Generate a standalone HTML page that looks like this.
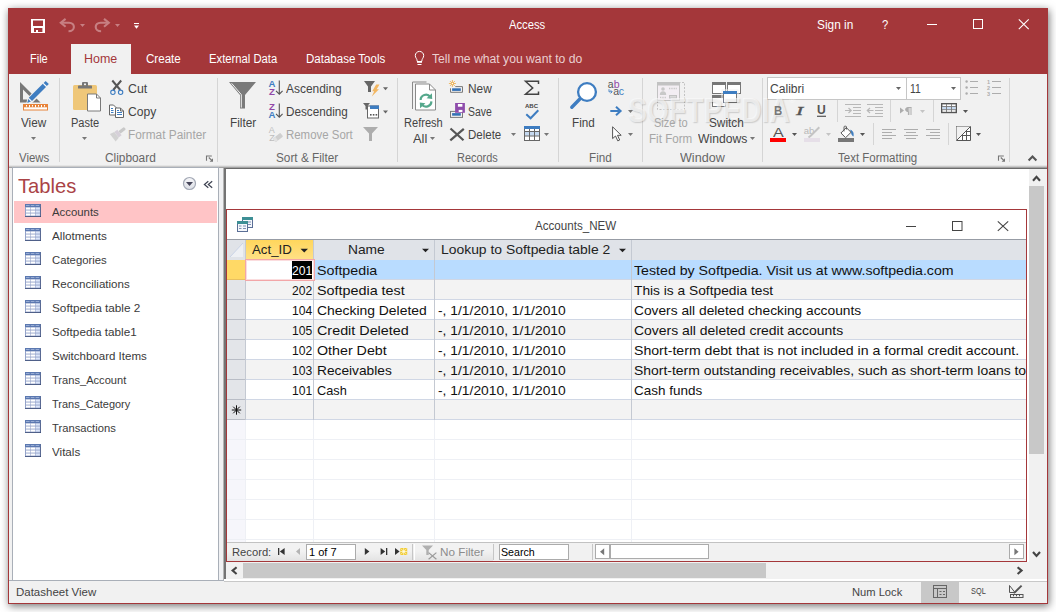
<!DOCTYPE html>
<html lang="en"><head><meta charset="utf-8"><title>Access</title>
<style>
html,body{margin:0;padding:0;}
body{width:1056px;height:612px;position:relative;overflow:hidden;background:#fff;font-family:"Liberation Sans",sans-serif;}
div{position:absolute;box-sizing:border-box;}
.t{position:absolute;white-space:nowrap;line-height:1;transform-origin:0 0;display:block;}
svg{position:absolute;left:0;top:0;}
</style></head><body>
<div style="left:8px;top:8px;width:1040px;height:596px;background:#F1F1F1;box-shadow:1px 2px 8px rgba(0,0,0,.55);"></div>
<div style="left:8px;top:8px;width:1040px;height:66px;background:#A4373A;"></div>
<div style="left:71px;top:44px;width:60px;height:30px;background:#F1F1F1;"></div>
<div style="left:9px;top:165px;width:1038px;height:1px;background:#E4E4E4;"></div>
<div style="left:9px;top:166px;width:1038px;height:1px;background:#CACACA;"></div>
<div style="left:9px;top:167px;width:1038px;height:1px;background:#A2A2A2;"></div>
<div style="left:8px;top:8px;width:1040px;height:596px;border:1px solid #A4373A;"></div>
<div style="left:12px;top:167px;width:207px;height:414px;background:#fff;border:1px solid #A9AFB8;"></div>
<div style="left:14px;top:201px;width:203px;height:22px;background:#FFC4C6;"></div>
<div style="left:219px;top:168px;width:4px;height:412px;background:#F0F1F3;"></div>
<div style="left:223px;top:168px;width:1px;height:412px;background:#B4B4B4;"></div>
<div style="left:9px;top:580px;width:215px;height:1px;background:#A9AFB8;"></div>
<div style="left:224px;top:168px;width:823px;height:411px;background:#fff;border-left:2px solid #747474;border-top:1px solid #6B6B6B;"></div>
<div style="left:224px;top:579px;width:823px;height:2px;background:#fff;"></div>
<div style="left:224px;top:581px;width:823px;height:1px;background:#C8C8C8;"></div>
<div style="left:1029px;top:169px;width:15px;height:394px;background:#F1F1F1;"></div>
<div style="left:1029px;top:186px;width:15px;height:268px;background:#C8C8C8;"></div>
<div style="left:1044px;top:169px;width:3px;height:410px;background:#F1F1F1;"></div>
<div style="left:226px;top:562px;width:821px;height:17px;background:#F1F1F1;"></div>
<div style="left:243px;top:563px;width:523px;height:15px;background:#C8C8C8;"></div>
<div style="left:226px;top:209px;width:801px;height:353px;background:#fff;border:1px solid #A4373A;"></div>
<div style="left:227px;top:239px;width:799px;height:21px;background:#E0E3E8;border-top:1px solid #979CA5;"></div>
<div style="left:246px;top:240px;width:68px;height:20px;background:linear-gradient(#FFD65C,#FFE187);"></div>
<div style="left:246px;top:260px;width:780px;height:20px;background:#B9DCFF;border-bottom:1px solid #D0D7E5;"></div>
<div style="left:246px;top:280px;width:780px;height:20px;background:#F3F3F3;border-bottom:1px solid #D0D7E5;"></div>
<div style="left:246px;top:300px;width:780px;height:20px;background:#fff;border-bottom:1px solid #D0D7E5;"></div>
<div style="left:246px;top:320px;width:780px;height:20px;background:#F3F3F3;border-bottom:1px solid #D0D7E5;"></div>
<div style="left:246px;top:340px;width:780px;height:20px;background:#fff;border-bottom:1px solid #D0D7E5;"></div>
<div style="left:246px;top:360px;width:780px;height:20px;background:#F3F3F3;border-bottom:1px solid #D0D7E5;"></div>
<div style="left:246px;top:380px;width:780px;height:20px;background:#fff;border-bottom:1px solid #D0D7E5;"></div>
<div style="left:246px;top:400px;width:780px;height:20px;background:#F3F3F3;border-bottom:1px solid #D0D7E5;"></div>
<div style="left:227px;top:420px;width:19px;height:123px;background:#F6F6FB;"></div>
<div style="left:227px;top:420px;width:799px;height:20px;border-bottom:1px solid #EEF0F5;"></div>
<div style="left:227px;top:440px;width:799px;height:20px;border-bottom:1px solid #EEF0F5;"></div>
<div style="left:227px;top:460px;width:799px;height:20px;border-bottom:1px solid #EEF0F5;"></div>
<div style="left:227px;top:480px;width:799px;height:20px;border-bottom:1px solid #EEF0F5;"></div>
<div style="left:227px;top:500px;width:799px;height:20px;border-bottom:1px solid #EEF0F5;"></div>
<div style="left:227px;top:520px;width:799px;height:20px;border-bottom:1px solid #EEF0F5;"></div>
<div style="left:227px;top:540px;width:799px;height:20px;border-bottom:1px solid #EEF0F5;"></div>
<div style="left:227px;top:260px;width:19px;height:160px;background:#E3E5E9;"></div>
<div style="left:227px;top:260px;width:19px;height:20px;border-bottom:1px solid #B9BDC6;"></div>
<div style="left:227px;top:280px;width:19px;height:20px;border-bottom:1px solid #B9BDC6;"></div>
<div style="left:227px;top:300px;width:19px;height:20px;border-bottom:1px solid #B9BDC6;"></div>
<div style="left:227px;top:320px;width:19px;height:20px;border-bottom:1px solid #B9BDC6;"></div>
<div style="left:227px;top:340px;width:19px;height:20px;border-bottom:1px solid #B9BDC6;"></div>
<div style="left:227px;top:360px;width:19px;height:20px;border-bottom:1px solid #B9BDC6;"></div>
<div style="left:227px;top:380px;width:19px;height:20px;border-bottom:1px solid #B9BDC6;"></div>
<div style="left:227px;top:400px;width:19px;height:20px;border-bottom:1px solid #B9BDC6;"></div>
<div style="left:227px;top:260px;width:19px;height:20px;background:#FFD966;border-bottom:1px solid #E8C060;"></div>
<div style="left:245px;top:240px;width:1px;height:180px;background:#C4C9D2;"></div>
<div style="left:245px;top:420px;width:1px;height:123px;background:#EEF0F5;"></div>
<div style="left:313px;top:240px;width:1px;height:180px;background:#C4C9D2;"></div>
<div style="left:313px;top:420px;width:1px;height:123px;background:#EEF0F5;"></div>
<div style="left:434px;top:240px;width:1px;height:180px;background:#C4C9D2;"></div>
<div style="left:434px;top:420px;width:1px;height:123px;background:#EEF0F5;"></div>
<div style="left:631px;top:240px;width:1px;height:180px;background:#C4C9D2;"></div>
<div style="left:631px;top:420px;width:1px;height:123px;background:#EEF0F5;"></div>
<div style="left:245px;top:259px;width:70px;height:22px;background:#fff;border:1px solid #F2A6A8;box-shadow:inset 0 0 0 1px rgba(244,170,172,.4);"></div>
<div style="left:292px;top:261px;width:20px;height:18px;background:#000;"></div>
<div style="left:227px;top:542px;width:799px;height:19px;background:#F1F1F1;border-top:1px solid #C2C2C2;"></div>
<div style="left:227px;top:543px;width:266px;height:18px;background:linear-gradient(#F2F2F2 45%,#E3E3E3);"></div>
<div style="left:306px;top:544px;width:50px;height:16px;background:#fff;border:1px solid #ABABAB;"></div>
<div style="left:412px;top:544px;width:1px;height:16px;background:#C6C6C6;"></div>
<div style="left:414px;top:544px;width:1px;height:16px;background:#fff;"></div>
<div style="left:493px;top:544px;width:1px;height:16px;background:#C6C6C6;"></div>
<div style="left:499px;top:544px;width:70px;height:16px;background:#fff;border:1px solid #ABABAB;"></div>
<div style="left:592px;top:544px;width:1px;height:16px;background:#C6C6C6;"></div>
<div style="left:595px;top:544px;width:15px;height:15px;background:#fff;border:1px solid #ABABAB;"></div>
<div style="left:610px;top:544px;width:99px;height:15px;background:#fff;border:1px solid #ABABAB;"></div>
<div style="left:1009px;top:544px;width:15px;height:15px;background:#fff;border:1px solid #ABABAB;"></div>
<div style="left:921px;top:581px;width:38px;height:22px;background:#C8C8C8;"></div>
<div style="left:59px;top:78px;width:1px;height:84px;background:#D5D5D5;"></div>
<div style="left:217px;top:78px;width:1px;height:84px;background:#D5D5D5;"></div>
<div style="left:397px;top:78px;width:1px;height:84px;background:#D5D5D5;"></div>
<div style="left:558px;top:78px;width:1px;height:84px;background:#D5D5D5;"></div>
<div style="left:642px;top:78px;width:1px;height:84px;background:#D5D5D5;"></div>
<div style="left:762px;top:78px;width:1px;height:84px;background:#D5D5D5;"></div>
<div style="left:1009px;top:78px;width:1px;height:84px;background:#D5D5D5;"></div>
<div style="left:837px;top:100px;width:1px;height:22px;background:#D5D5D5;"></div>
<div style="left:890px;top:100px;width:1px;height:22px;background:#D5D5D5;"></div>
<div style="left:933px;top:100px;width:1px;height:22px;background:#D5D5D5;"></div>
<div style="left:873px;top:123px;width:1px;height:22px;background:#D5D5D5;"></div>
<div style="left:948px;top:123px;width:1px;height:22px;background:#D5D5D5;"></div>
<div style="left:767px;top:77px;width:140px;height:23px;background:#fff;border:1px solid #C6C6C6;"></div>
<div style="left:906px;top:77px;width:55px;height:23px;background:#fff;border:1px solid #C6C6C6;"></div>
<svg width="1056" height="612" viewBox="0 0 1056 612">
<rect x="31" y="19" width="14" height="14" fill="#fff"/>
<rect x="33" y="20.5" width="10" height="5.5" fill="#A4373A"/>
<rect x="34" y="28" width="8.4" height="4" fill="#A4373A"/>
<rect x="36" y="30" width="2" height="2" fill="#fff"/>
<path d="M61,22.8 H69 C75.6,22.8 75.6,31.2 68.5,31.2" fill="none" stroke="#C77F82" stroke-width="2.1"/>
<path d="M65.6,18.9 L60.8,22.8 L65.6,26.7" fill="none" stroke="#C77F82" stroke-width="2.1"/>
<path d="M108.6,22.8 H100.6 C94,22.8 94,31.2 101.1,31.2" fill="none" stroke="#C77F82" stroke-width="2.1"/>
<path d="M104,18.9 L108.8,22.8 L104,26.7" fill="none" stroke="#C77F82" stroke-width="2.1"/>
<polygon points="80,24 85,24 82.5,27" fill="#C77F82"/>
<polygon points="115,24 120,24 117.5,27" fill="#C77F82"/>
<rect x="134" y="23" width="5" height="1" fill="#fff"/>
<polygon points="134,25.5 139,25.5 136.5,28.7" fill="#fff"/>
<rect x="927" y="24" width="10" height="1" fill="#fff"/>
<rect x="973.5" y="19.5" width="9" height="9" fill="none" stroke="#fff" stroke-width="1"/>
<path d="M1018.8,19.3 L1028.7,29.2 M1028.7,19.3 L1018.8,29.2" stroke="#fff" stroke-width="1.1" fill="none"/>
<path d="M417.2,61.3 C417.2,58.6 415.3,58 415.3,55.6 A4.2,4.2 0 1 1 423.7,55.6 C423.7,58 421.8,58.6 421.8,61.3" fill="none" stroke="#fff" stroke-width="1"/>
<rect x="417" y="61" width="5" height="1.8" fill="#fff"/><rect x="417.5" y="64" width="4" height="1" fill="#fff"/>
<path d="M20,82 L20,102.5 L40.5,102.5 Z M23,89.5 L23,99.5 L33,99.5 Z" fill="#787878" fill-rule="evenodd"/>
<path d="M45.2,80.8 L49,84.6 L31.5,102 L27.6,103 L28.6,98.6 Z" fill="#fff" stroke="#F1F1F1" stroke-width="2.4"/>
<path d="M45.6,80.9 L48.8,84.1 L46.8,86.1 L43.6,82.9 Z" fill="#3E7DC1"/>
<path d="M42.8,83.7 L46,86.9 L32,100.9 L28.8,97.7 Z" fill="#3E7DC1"/>
<path d="M28.2,98.9 L30.9,101.6 L27.3,103 Z" fill="#3E7DC1"/>
<rect x="23.5" y="104.5" width="24" height="5.5" fill="#fff" stroke="#E8843B" stroke-width="1"/>
<rect x="24" y="105" width="23" height="2.3" fill="#E8843B"/>
<rect x="26" y="105" width="1" height="1.6" fill="#fff"/>
<rect x="29" y="105" width="1" height="2.3" fill="#fff"/>
<rect x="32" y="105" width="1" height="1.6" fill="#fff"/>
<rect x="35" y="105" width="1" height="2.3" fill="#fff"/>
<rect x="38" y="105" width="1" height="1.6" fill="#fff"/>
<rect x="41" y="105" width="1" height="2.3" fill="#fff"/>
<rect x="44" y="105" width="1" height="1.6" fill="#fff"/>
<polygon points="31,137 36,137 33.5,140" fill="#777"/>
<polygon points="82,137 87,137 84.5,140" fill="#777"/>
<rect x="73" y="85" width="24" height="25" rx="1.5" fill="#EFC779"/>
<path d="M78,88.5 V86.2 Q78,85.5 78.8,85.5 H82 V83 Q82,82 83,82 H87 Q88,82 88,83 V85.5 H91.2 Q92,85.5 92,86.2 V88.5 Z M84,83.6 H86 V85.2 H84 Z" fill="#777" fill-rule="evenodd"/>
<path d="M87.5,94 H96.5 L100.5,98 V111 H87.5 Z" fill="#fff" stroke="#7A7A7A" stroke-width="1"/>
<path d="M96.5,94 V98 H100.5" fill="none" stroke="#7A7A7A" stroke-width="1"/>
<path d="M112.3,80.5 L120.3,90 M121.2,80.5 L113.2,90" stroke="#555" stroke-width="2" fill="none"/>
<circle cx="112.9" cy="92.3" r="2.2" fill="none" stroke="#3E7DC1" stroke-width="1.1"/><circle cx="120.6" cy="92.3" r="2.2" fill="none" stroke="#3E7DC1" stroke-width="1.1"/>
<path d="M109.5,105 H113.5 L116.5,108 V115 H109.5 Z" fill="#fff" stroke="#666" stroke-width="1"/>
<path d="M111,108.5 H113 M111,110.5 H113.5 M111,112.5 H113.5" stroke="#3E7DC1" stroke-width="1"/>
<path d="M115.5,108 H120.5 L123.5,111 V117.5 H115.5 Z" fill="#fff" stroke="#666" stroke-width="1"/>
<path d="M120.5,108 V111 H123.5" fill="none" stroke="#666" stroke-width="1"/>
<path d="M117,112.5 H122 M117,114.5 H122 M117,110.5 H119" stroke="#3E7DC1" stroke-width="1"/>
<g transform="rotate(-38 117.5 134)"><rect x="120" y="132.4" width="7" height="3.2" rx="1" fill="#C9C9C9"/><rect x="116.2" y="130.5" width="3.8" height="7" fill="#D6D0D9"/><path d="M116.2,130.3 L111.5,129.3 L111.5,138.7 L116.2,137.7 Z" fill="#D2D2D2"/></g>
<path d="M229,82 H256 L245,95 V108.5 H240 V95 Z" fill="#7A7A7A"/>
<path d="M231.6,83.3 L241.3,94.6 V107.6" fill="none" stroke="#fff" stroke-width="0.9"/>
<text x="268.5" y="86.7" font-family="Liberation Sans, sans-serif" font-size="9.6" font-weight="bold" fill="#3E7DC1" >A</text>
<text x="269" y="95" font-family="Liberation Sans, sans-serif" font-size="9.6" font-weight="bold" fill="#9148A8" >Z</text>
<text x="269" y="109.7" font-family="Liberation Sans, sans-serif" font-size="9.6" font-weight="bold" fill="#9148A8" >Z</text>
<text x="268.5" y="118" font-family="Liberation Sans, sans-serif" font-size="9.6" font-weight="bold" fill="#3E7DC1" >A</text>
<path d="M279.3,80.5 V94.0 M276,90.8 L279.3,94.2 L282.6,90.8" fill="none" stroke="#555" stroke-width="1.1"/>
<path d="M279.3,103.5 V117.0 M276,113.8 L279.3,117.2 L282.6,113.8" fill="none" stroke="#555" stroke-width="1.1"/>
<text x="268.8" y="132.6" font-family="Liberation Sans, sans-serif" font-size="9" font-weight="normal" fill="#BDBDBD" >A</text>
<text x="269.2" y="141" font-family="Liberation Sans, sans-serif" font-size="9" font-weight="normal" fill="#BDBDBD" >Z</text>
<g transform="rotate(-38 278 137.5)"><rect x="273.2" y="135.2" width="9.5" height="4.6" rx="0.8" fill="#CFCFCF"/><rect x="273.2" y="135.2" width="3" height="4.6" fill="#E2E2E2"/></g>
<path d="M364,81 H375 L371,86.5 V92 H368 V86.5 Z" fill="#666"/>
<path d="M376.2,84.6 H379.5 L376.7,89.3 H379 L371.8,96.5 L374.2,91.3 H372.2 Z" fill="#F2B661"/>
<polygon points="383,87.3 388,87.3 385.5,90.3" fill="#666"/>
<path d="M363,103 H370 L367.5,106 V109.5 H365.5 V106 Z" fill="#666"/>
<rect x="367.5" y="106" width="11" height="12" fill="#fff" stroke="#666" stroke-width="1"/>
<rect x="370" y="105.5" width="9" height="3.5" fill="#3E7DC1"/>
<rect x="370" y="114" width="1.6" height="1.6" fill="#555"/><rect x="372.8" y="114" width="1.6" height="1.6" fill="#555"/><rect x="375.6" y="114" width="1.6" height="1.6" fill="#555"/>
<polygon points="383,110.5 388,110.5 385.5,113.5" fill="#666"/>
<path d="M363,127 H378 L372,133.5 V141 H369 V133.5 Z" fill="#ADADAD"/>
<path d="M426.5,82 H412.5 V109" fill="none" stroke="#8A8A8A" stroke-width="1"/>
<path d="M415.5,84 H429.5 L435.5,90 V110 H415.5 Z" fill="#fff" stroke="#8A8A8A" stroke-width="1"/>
<path d="M429.5,84 V90 H435.5" fill="none" stroke="#8A8A8A" stroke-width="1"/>
<path d="M420.6,100 A5.4,5.4 0 0 1 430.2,96.8" fill="none" stroke="#55A88C" stroke-width="2.2"/>
<path d="M431.9,93.2 L432.2,99 L426.6,98.2 Z" fill="#55A88C"/>
<path d="M431.4,101.4 A5.4,5.4 0 0 1 421.8,104.6" fill="none" stroke="#55A88C" stroke-width="2.2"/>
<path d="M420.1,108.2 L419.8,102.4 L425.4,103.2 Z" fill="#55A88C"/>
<polygon points="430,137 435,137 432.5,140" fill="#777"/>
<path d="M455.3,86.6 H462.5 V92.3 H450.5 V88.3" fill="none" stroke="#7A7A7A" stroke-width="1"/>
<rect x="452.1" y="88.3" width="8.7" height="2.6" fill="#3471B5"/>
<path d="M452.4,80 V87 M448.9,83.5 H455.9 M449.9,81 L454.9,86 M454.9,81 L449.9,86" stroke="#EDB45C" stroke-width="0.9"/>
<circle cx="452.4" cy="83.5" r="1.7" fill="#EDB45C"/><circle cx="452.4" cy="83.5" r="0.7" fill="#fff"/>
<rect x="450.5" y="111.4" width="12" height="6" fill="none" stroke="#7A7A7A" stroke-width="1"/>
<rect x="452.1" y="113.1" width="8.7" height="2.6" fill="#3471B5"/>
<rect x="455.1" y="103" width="9.8" height="9.8" fill="#8E4CAB"/>
<rect x="457.9" y="104" width="4.5" height="2.7" fill="#fff"/><rect x="458.7" y="109.9" width="3.7" height="2.1" fill="#fff"/>
<path d="M450.5,128.5 L463.5,140.3 M463.8,128.8 L450.3,140.3" stroke="#555" stroke-width="2.2" fill="none"/>
<polygon points="511,133 516,133 513.5,136" fill="#777"/>
<path d="M538.5,84 V81.3 H525.5 L532.7,88 L525.5,94.2 H538.5 V91.6" fill="none" stroke="#444" stroke-width="1.5"/>
<text x="525" y="107.6" font-family="Liberation Sans, sans-serif" font-size="6.2" font-weight="bold" fill="#444" textLength="13" lengthAdjust="spacingAndGlyphs">ABC</text>
<path d="M526.3,114.3 L530.6,118.3 L538.3,110.3" fill="none" stroke="#3E7DC1" stroke-width="2"/>
<rect x="524.5" y="126.5" width="15" height="14" fill="#fff" stroke="#666" stroke-width="1"/>
<rect x="525" y="131.7" width="14" height="4" fill="#C5D9F0"/>
<rect x="524" y="126" width="16" height="3" fill="#3E7DC1"/>
<path d="M529.5,129 V140.5 M534.5,129 V140.5 M525,131.5 H539 M525,136 H539" stroke="#666" stroke-width="1" fill="none"/>
<polygon points="544,133 549,133 546.5,136" fill="#777"/>
<path d="M580.3,98.5 L571.8,107.2" stroke="#3E7DC1" stroke-width="3.4" stroke-linecap="round"/>
<circle cx="587" cy="92" r="8.9" fill="#fff" stroke="#3E7DC1" stroke-width="2.3"/>
<text x="607.7" y="87.5" font-family="Liberation Sans, sans-serif" font-size="10.5" font-weight="normal" fill="#555" >a</text>
<text x="613.8" y="87.5" font-family="Liberation Sans, sans-serif" font-size="10.5" font-weight="normal" fill="#9148A8" >b</text>
<text x="613.2" y="95.3" font-family="Liberation Sans, sans-serif" font-size="10.5" font-weight="normal" fill="#555" >a</text>
<text x="618.8" y="95.3" font-family="Liberation Sans, sans-serif" font-size="10.5" font-weight="normal" fill="#3E7DC1" >c</text>
<path d="M609,89.2 V91.8 H612 M610.6,90.2 L612.2,91.8 L610.6,93.4" fill="none" stroke="#3E7DC1" stroke-width="0.9"/>
<path d="M610.3,111 H620 M616,106.8 L620.6,111 L616,115.2" fill="none" stroke="#3E7DC1" stroke-width="2"/>
<polygon points="628,110 633,110 630.5,113" fill="#777"/>
<polygon points="628,133 633,133 630.5,136" fill="#777"/>
<path d="M612.6,126.8 V138.6 L615.5,136 L617.8,140.9 L619.7,140 L617.5,135.3 H621.2 Z" fill="#fff" stroke="#555" stroke-width="1"/>
<rect x="657.5" y="82.5" width="27" height="27" fill="none" stroke="#C2C2C2" stroke-width="1" stroke-dasharray="2 1.5"/>
<rect x="657.5" y="82.5" width="22" height="18" fill="#F3EEF3" stroke="#C2C2C2" stroke-width="1"/>
<rect x="657" y="82" width="23" height="3.5" fill="#C2C2C2"/>
<circle cx="663" cy="89" r="1.8" fill="#C8C8C8"/><path d="M659.8,95 Q659.8,91.3 663,91.3 Q666.2,91.3 666.2,95 Z" fill="#C8C8C8"/>
<path d="M669,88.5 H677 M660,97.5 H666" stroke="#C8C8C8" stroke-width="1.5" stroke-dasharray="1 0.7"/>
<rect x="669.5" y="95.5" width="7" height="2.5" fill="#DADADA" stroke="#C2C2C2" stroke-width="1"/>
<rect x="712.5" y="82.5" width="13" height="11" fill="#fff" stroke="#777" stroke-width="1"/><rect x="712" y="82" width="14" height="3" fill="#777"/>
<rect x="727.5" y="82.5" width="13" height="11" fill="#fff" stroke="#777" stroke-width="1"/><rect x="727" y="82" width="14" height="3" fill="#777"/>
<rect x="712.5" y="95.5" width="13" height="11" fill="#fff" stroke="#777" stroke-width="1"/><rect x="712" y="95" width="14" height="3" fill="#777"/>
<rect x="723.5" y="91.5" width="13" height="11" fill="#fff" stroke="#777" stroke-width="1"/><rect x="723" y="91" width="14" height="3" fill="#3E7DC1"/>
<rect x="722" y="90" width="16" height="14" fill="none" stroke="#F1F1F1" stroke-width="1"/>
<polygon points="750,137 755,137 752.5,140" fill="#777"/>
<polygon points="896,87 901,87 898.5,90" fill="#666"/>
<polygon points="951,87 956,87 953.5,90" fill="#666"/>
<circle cx="966.6" cy="81.5" r="1.2" fill="#ADADAD"/><rect x="970" y="81.0" width="8" height="1" fill="#ADADAD"/>
<rect x="992" y="81.0" width="9" height="1" fill="#ADADAD"/>
<text x="987" y="83.5" font-family="Liberation Sans, sans-serif" font-size="5.5" font-weight="bold" fill="#ADADAD" >1</text>
<circle cx="966.6" cy="87.5" r="1.2" fill="#ADADAD"/><rect x="970" y="87.0" width="8" height="1" fill="#ADADAD"/>
<rect x="992" y="87.0" width="9" height="1" fill="#ADADAD"/>
<text x="987" y="89.5" font-family="Liberation Sans, sans-serif" font-size="5.5" font-weight="bold" fill="#ADADAD" >2</text>
<circle cx="966.6" cy="93.5" r="1.2" fill="#ADADAD"/><rect x="970" y="93.0" width="8" height="1" fill="#ADADAD"/>
<rect x="992" y="93.0" width="9" height="1" fill="#ADADAD"/>
<text x="987" y="95.5" font-family="Liberation Sans, sans-serif" font-size="5.5" font-weight="bold" fill="#ADADAD" >3</text>
<rect x="817" y="115.7" width="9" height="1.2" fill="#555"/>
<path d="M845,104.5 H861 M853,107.5 H861 M853,110.5 H861 M853,113.5 H861 M845,116.5 H861" stroke="#B8B8B8" stroke-width="1"/>
<path d="M845,110.5 H851 M848.5,108 L851.2,110.5 L848.5,113" fill="none" stroke="#B8B8B8" stroke-width="1.2"/>
<path d="M867,104.5 H883 M875,107.5 H883 M875,110.5 H883 M875,113.5 H883 M867,116.5 H883" stroke="#B8B8B8" stroke-width="1"/>
<path d="M873.5,110.5 H867.5 M870,108 L867.3,110.5 L870,113" fill="none" stroke="#B8B8B8" stroke-width="1.2"/>
<path d="M900,107.5 L904,110.5 L900,113.5 Z" fill="#ADADAD"/>
<path d="M911.5,107.5 H908 Q905.6,107.5 905.6,109.6 Q905.6,111.6 908.4,111.6 V115 M908.9,107.5 V115 M911,107.5 V115" fill="none" stroke="#ADADAD" stroke-width="1"/><path d="M908.4,107.5 Q905.6,107.5 905.6,109.6 Q905.6,111.6 908.4,111.6 Z" fill="#ADADAD"/>
<polygon points="920,110 925,110 922.5,113" fill="#C4C4C4"/>
<rect x="941.7" y="103.7" width="14.6" height="8.8" fill="#fff" stroke="#555" stroke-width="1.4"/>
<rect x="942.4" y="106.7" width="13.2" height="2.8" fill="#C5D9F0"/>
<path d="M946.5,104 V112 M951.5,104 V112 M942,106.5 H956 M942,109.7 H956" stroke="#777" stroke-width="0.9"/>
<polygon points="963,110 968,110 965.5,113" fill="#555"/>
<rect x="770" y="138" width="16" height="4" fill="#FF0000"/>
<polygon points="792,133 797,133 794.5,136" fill="#555"/>
<text x="803.8" y="134" font-family="Liberation Sans, sans-serif" font-size="9.5" font-weight="normal" fill="#B8B8B8" >ab</text>
<path d="M819.3,127.3 L811,135.5 L808.5,137.6" stroke="#C4C4C4" stroke-width="2" fill="none"/>
<rect x="804" y="138" width="16" height="4" fill="#E6DFE8"/>
<polygon points="826,133 831,133 828.5,136" fill="#C4C4C4"/>
<rect x="838" y="138" width="16" height="4" fill="#777"/>
<path d="M850.6,130 Q854,131.5 853.2,136.2 Q851,134.5 850.6,130 Z" fill="#3E7DC1" stroke="#3E7DC1" stroke-width="0.6"/>
<path d="M846.3,127.6 L851,132.3 L845.6,137.7 L840.9,133 Z" fill="#fff" stroke="#555" stroke-width="1"/>
<path d="M844,131.5 V127 Q844,126.2 844.9,126.2 H845.6 Q846.5,126.2 846.5,127 V129.5" fill="none" stroke="#555" stroke-width="0.9"/>
<polygon points="860,133 865,133 862.5,136" fill="#555"/>
<rect x="882" y="129.0" width="14" height="1" fill="#ADADAD"/>
<rect x="882" y="132.0" width="10" height="1" fill="#ADADAD"/>
<rect x="882" y="135.0" width="14" height="1" fill="#ADADAD"/>
<rect x="882" y="138.0" width="10" height="1" fill="#ADADAD"/>
<rect x="904" y="129.0" width="14" height="1" fill="#ADADAD"/>
<rect x="906" y="132.0" width="10" height="1" fill="#ADADAD"/>
<rect x="904" y="135.0" width="14" height="1" fill="#ADADAD"/>
<rect x="906" y="138.0" width="10" height="1" fill="#ADADAD"/>
<rect x="926" y="129.0" width="14" height="1" fill="#ADADAD"/>
<rect x="930" y="132.0" width="10" height="1" fill="#ADADAD"/>
<rect x="926" y="135.0" width="14" height="1" fill="#ADADAD"/>
<rect x="930" y="138.0" width="10" height="1" fill="#ADADAD"/>
<path d="M956.5,126.5 H970.5 M956.5,126.5 V140" stroke="#555" stroke-width="1" stroke-dasharray="1 1" fill="none"/>
<path d="M956.5,140.5 L970.5,126.5 V140.5 Z" fill="#fff" stroke="#555" stroke-width="1"/>
<path d="M966.5,130.5 V140.5 M962.5,134.5 V140.5 M966.5,131.5 H970.5 M961.5,135.5 H970.5" stroke="#555" stroke-width="1" fill="none"/>
<polygon points="976,133 981,133 978.5,136" fill="#555"/>
<path d="M206.5,160.7 V156.0 H211.8" fill="none" stroke="#777" stroke-width="1.1"/>
<path d="M208.8,157.5 L212,160.7" fill="none" stroke="#777" stroke-width="1.2"/><polygon points="213,158.3 213,161.7 209.6,161.7" fill="#777"/>
<path d="M998.5,160.7 V156.0 H1003.8" fill="none" stroke="#777" stroke-width="1.1"/>
<path d="M1000.8,157.5 L1004,160.7" fill="none" stroke="#777" stroke-width="1.2"/><polygon points="1005,158.3 1005,161.7 1001.6,161.7" fill="#777"/>
<path d="M1028.6,160.6 L1032.5,156.6 L1036.4,160.6" fill="none" stroke="#555" stroke-width="2.1"/>
<rect x="25" y="204" width="16" height="13" fill="#33446E"/>
<rect x="25" y="204" width="15.4" height="12.3" fill="#93A2C9"/>
<rect x="25" y="204" width="15.4" height="3" fill="#5B78B0"/>
<rect x="26.0" y="205" width="3.6" height="0.9" fill="#9FB3DA"/>
<rect x="26.0" y="207.5" width="4.3" height="2.1" fill="#fff"/>
<rect x="26.0" y="210.5" width="4.3" height="2.1" fill="#fff"/>
<rect x="26.0" y="213.5" width="4.3" height="2.1" fill="#fff"/>
<rect x="30.8" y="205" width="3.6" height="0.9" fill="#9FB3DA"/>
<rect x="30.8" y="207.5" width="4.3" height="2.1" fill="#fff"/>
<rect x="30.8" y="210.5" width="4.3" height="2.1" fill="#fff"/>
<rect x="30.8" y="213.5" width="4.3" height="2.1" fill="#fff"/>
<rect x="35.6" y="205" width="3.6" height="0.9" fill="#9FB3DA"/>
<rect x="35.6" y="207.5" width="4.3" height="2.1" fill="#DCE6FA"/>
<rect x="35.6" y="210.5" width="4.3" height="2.1" fill="#DCE6FA"/>
<rect x="35.6" y="213.5" width="4.3" height="2.1" fill="#DCE6FA"/>
<rect x="25" y="228" width="16" height="13" fill="#33446E"/>
<rect x="25" y="228" width="15.4" height="12.3" fill="#93A2C9"/>
<rect x="25" y="228" width="15.4" height="3" fill="#5B78B0"/>
<rect x="26.0" y="229" width="3.6" height="0.9" fill="#9FB3DA"/>
<rect x="26.0" y="231.5" width="4.3" height="2.1" fill="#fff"/>
<rect x="26.0" y="234.5" width="4.3" height="2.1" fill="#fff"/>
<rect x="26.0" y="237.5" width="4.3" height="2.1" fill="#fff"/>
<rect x="30.8" y="229" width="3.6" height="0.9" fill="#9FB3DA"/>
<rect x="30.8" y="231.5" width="4.3" height="2.1" fill="#fff"/>
<rect x="30.8" y="234.5" width="4.3" height="2.1" fill="#fff"/>
<rect x="30.8" y="237.5" width="4.3" height="2.1" fill="#fff"/>
<rect x="35.6" y="229" width="3.6" height="0.9" fill="#9FB3DA"/>
<rect x="35.6" y="231.5" width="4.3" height="2.1" fill="#DCE6FA"/>
<rect x="35.6" y="234.5" width="4.3" height="2.1" fill="#DCE6FA"/>
<rect x="35.6" y="237.5" width="4.3" height="2.1" fill="#DCE6FA"/>
<rect x="25" y="252" width="16" height="13" fill="#33446E"/>
<rect x="25" y="252" width="15.4" height="12.3" fill="#93A2C9"/>
<rect x="25" y="252" width="15.4" height="3" fill="#5B78B0"/>
<rect x="26.0" y="253" width="3.6" height="0.9" fill="#9FB3DA"/>
<rect x="26.0" y="255.5" width="4.3" height="2.1" fill="#fff"/>
<rect x="26.0" y="258.5" width="4.3" height="2.1" fill="#fff"/>
<rect x="26.0" y="261.5" width="4.3" height="2.1" fill="#fff"/>
<rect x="30.8" y="253" width="3.6" height="0.9" fill="#9FB3DA"/>
<rect x="30.8" y="255.5" width="4.3" height="2.1" fill="#fff"/>
<rect x="30.8" y="258.5" width="4.3" height="2.1" fill="#fff"/>
<rect x="30.8" y="261.5" width="4.3" height="2.1" fill="#fff"/>
<rect x="35.6" y="253" width="3.6" height="0.9" fill="#9FB3DA"/>
<rect x="35.6" y="255.5" width="4.3" height="2.1" fill="#DCE6FA"/>
<rect x="35.6" y="258.5" width="4.3" height="2.1" fill="#DCE6FA"/>
<rect x="35.6" y="261.5" width="4.3" height="2.1" fill="#DCE6FA"/>
<rect x="25" y="276" width="16" height="13" fill="#33446E"/>
<rect x="25" y="276" width="15.4" height="12.3" fill="#93A2C9"/>
<rect x="25" y="276" width="15.4" height="3" fill="#5B78B0"/>
<rect x="26.0" y="277" width="3.6" height="0.9" fill="#9FB3DA"/>
<rect x="26.0" y="279.5" width="4.3" height="2.1" fill="#fff"/>
<rect x="26.0" y="282.5" width="4.3" height="2.1" fill="#fff"/>
<rect x="26.0" y="285.5" width="4.3" height="2.1" fill="#fff"/>
<rect x="30.8" y="277" width="3.6" height="0.9" fill="#9FB3DA"/>
<rect x="30.8" y="279.5" width="4.3" height="2.1" fill="#fff"/>
<rect x="30.8" y="282.5" width="4.3" height="2.1" fill="#fff"/>
<rect x="30.8" y="285.5" width="4.3" height="2.1" fill="#fff"/>
<rect x="35.6" y="277" width="3.6" height="0.9" fill="#9FB3DA"/>
<rect x="35.6" y="279.5" width="4.3" height="2.1" fill="#DCE6FA"/>
<rect x="35.6" y="282.5" width="4.3" height="2.1" fill="#DCE6FA"/>
<rect x="35.6" y="285.5" width="4.3" height="2.1" fill="#DCE6FA"/>
<rect x="25" y="300" width="16" height="13" fill="#33446E"/>
<rect x="25" y="300" width="15.4" height="12.3" fill="#93A2C9"/>
<rect x="25" y="300" width="15.4" height="3" fill="#5B78B0"/>
<rect x="26.0" y="301" width="3.6" height="0.9" fill="#9FB3DA"/>
<rect x="26.0" y="303.5" width="4.3" height="2.1" fill="#fff"/>
<rect x="26.0" y="306.5" width="4.3" height="2.1" fill="#fff"/>
<rect x="26.0" y="309.5" width="4.3" height="2.1" fill="#fff"/>
<rect x="30.8" y="301" width="3.6" height="0.9" fill="#9FB3DA"/>
<rect x="30.8" y="303.5" width="4.3" height="2.1" fill="#fff"/>
<rect x="30.8" y="306.5" width="4.3" height="2.1" fill="#fff"/>
<rect x="30.8" y="309.5" width="4.3" height="2.1" fill="#fff"/>
<rect x="35.6" y="301" width="3.6" height="0.9" fill="#9FB3DA"/>
<rect x="35.6" y="303.5" width="4.3" height="2.1" fill="#DCE6FA"/>
<rect x="35.6" y="306.5" width="4.3" height="2.1" fill="#DCE6FA"/>
<rect x="35.6" y="309.5" width="4.3" height="2.1" fill="#DCE6FA"/>
<rect x="25" y="324" width="16" height="13" fill="#33446E"/>
<rect x="25" y="324" width="15.4" height="12.3" fill="#93A2C9"/>
<rect x="25" y="324" width="15.4" height="3" fill="#5B78B0"/>
<rect x="26.0" y="325" width="3.6" height="0.9" fill="#9FB3DA"/>
<rect x="26.0" y="327.5" width="4.3" height="2.1" fill="#fff"/>
<rect x="26.0" y="330.5" width="4.3" height="2.1" fill="#fff"/>
<rect x="26.0" y="333.5" width="4.3" height="2.1" fill="#fff"/>
<rect x="30.8" y="325" width="3.6" height="0.9" fill="#9FB3DA"/>
<rect x="30.8" y="327.5" width="4.3" height="2.1" fill="#fff"/>
<rect x="30.8" y="330.5" width="4.3" height="2.1" fill="#fff"/>
<rect x="30.8" y="333.5" width="4.3" height="2.1" fill="#fff"/>
<rect x="35.6" y="325" width="3.6" height="0.9" fill="#9FB3DA"/>
<rect x="35.6" y="327.5" width="4.3" height="2.1" fill="#DCE6FA"/>
<rect x="35.6" y="330.5" width="4.3" height="2.1" fill="#DCE6FA"/>
<rect x="35.6" y="333.5" width="4.3" height="2.1" fill="#DCE6FA"/>
<rect x="25" y="348" width="16" height="13" fill="#33446E"/>
<rect x="25" y="348" width="15.4" height="12.3" fill="#93A2C9"/>
<rect x="25" y="348" width="15.4" height="3" fill="#5B78B0"/>
<rect x="26.0" y="349" width="3.6" height="0.9" fill="#9FB3DA"/>
<rect x="26.0" y="351.5" width="4.3" height="2.1" fill="#fff"/>
<rect x="26.0" y="354.5" width="4.3" height="2.1" fill="#fff"/>
<rect x="26.0" y="357.5" width="4.3" height="2.1" fill="#fff"/>
<rect x="30.8" y="349" width="3.6" height="0.9" fill="#9FB3DA"/>
<rect x="30.8" y="351.5" width="4.3" height="2.1" fill="#fff"/>
<rect x="30.8" y="354.5" width="4.3" height="2.1" fill="#fff"/>
<rect x="30.8" y="357.5" width="4.3" height="2.1" fill="#fff"/>
<rect x="35.6" y="349" width="3.6" height="0.9" fill="#9FB3DA"/>
<rect x="35.6" y="351.5" width="4.3" height="2.1" fill="#DCE6FA"/>
<rect x="35.6" y="354.5" width="4.3" height="2.1" fill="#DCE6FA"/>
<rect x="35.6" y="357.5" width="4.3" height="2.1" fill="#DCE6FA"/>
<rect x="25" y="372" width="16" height="13" fill="#33446E"/>
<rect x="25" y="372" width="15.4" height="12.3" fill="#93A2C9"/>
<rect x="25" y="372" width="15.4" height="3" fill="#5B78B0"/>
<rect x="26.0" y="373" width="3.6" height="0.9" fill="#9FB3DA"/>
<rect x="26.0" y="375.5" width="4.3" height="2.1" fill="#fff"/>
<rect x="26.0" y="378.5" width="4.3" height="2.1" fill="#fff"/>
<rect x="26.0" y="381.5" width="4.3" height="2.1" fill="#fff"/>
<rect x="30.8" y="373" width="3.6" height="0.9" fill="#9FB3DA"/>
<rect x="30.8" y="375.5" width="4.3" height="2.1" fill="#fff"/>
<rect x="30.8" y="378.5" width="4.3" height="2.1" fill="#fff"/>
<rect x="30.8" y="381.5" width="4.3" height="2.1" fill="#fff"/>
<rect x="35.6" y="373" width="3.6" height="0.9" fill="#9FB3DA"/>
<rect x="35.6" y="375.5" width="4.3" height="2.1" fill="#DCE6FA"/>
<rect x="35.6" y="378.5" width="4.3" height="2.1" fill="#DCE6FA"/>
<rect x="35.6" y="381.5" width="4.3" height="2.1" fill="#DCE6FA"/>
<rect x="25" y="396" width="16" height="13" fill="#33446E"/>
<rect x="25" y="396" width="15.4" height="12.3" fill="#93A2C9"/>
<rect x="25" y="396" width="15.4" height="3" fill="#5B78B0"/>
<rect x="26.0" y="397" width="3.6" height="0.9" fill="#9FB3DA"/>
<rect x="26.0" y="399.5" width="4.3" height="2.1" fill="#fff"/>
<rect x="26.0" y="402.5" width="4.3" height="2.1" fill="#fff"/>
<rect x="26.0" y="405.5" width="4.3" height="2.1" fill="#fff"/>
<rect x="30.8" y="397" width="3.6" height="0.9" fill="#9FB3DA"/>
<rect x="30.8" y="399.5" width="4.3" height="2.1" fill="#fff"/>
<rect x="30.8" y="402.5" width="4.3" height="2.1" fill="#fff"/>
<rect x="30.8" y="405.5" width="4.3" height="2.1" fill="#fff"/>
<rect x="35.6" y="397" width="3.6" height="0.9" fill="#9FB3DA"/>
<rect x="35.6" y="399.5" width="4.3" height="2.1" fill="#DCE6FA"/>
<rect x="35.6" y="402.5" width="4.3" height="2.1" fill="#DCE6FA"/>
<rect x="35.6" y="405.5" width="4.3" height="2.1" fill="#DCE6FA"/>
<rect x="25" y="420" width="16" height="13" fill="#33446E"/>
<rect x="25" y="420" width="15.4" height="12.3" fill="#93A2C9"/>
<rect x="25" y="420" width="15.4" height="3" fill="#5B78B0"/>
<rect x="26.0" y="421" width="3.6" height="0.9" fill="#9FB3DA"/>
<rect x="26.0" y="423.5" width="4.3" height="2.1" fill="#fff"/>
<rect x="26.0" y="426.5" width="4.3" height="2.1" fill="#fff"/>
<rect x="26.0" y="429.5" width="4.3" height="2.1" fill="#fff"/>
<rect x="30.8" y="421" width="3.6" height="0.9" fill="#9FB3DA"/>
<rect x="30.8" y="423.5" width="4.3" height="2.1" fill="#fff"/>
<rect x="30.8" y="426.5" width="4.3" height="2.1" fill="#fff"/>
<rect x="30.8" y="429.5" width="4.3" height="2.1" fill="#fff"/>
<rect x="35.6" y="421" width="3.6" height="0.9" fill="#9FB3DA"/>
<rect x="35.6" y="423.5" width="4.3" height="2.1" fill="#DCE6FA"/>
<rect x="35.6" y="426.5" width="4.3" height="2.1" fill="#DCE6FA"/>
<rect x="35.6" y="429.5" width="4.3" height="2.1" fill="#DCE6FA"/>
<rect x="25" y="444" width="16" height="13" fill="#33446E"/>
<rect x="25" y="444" width="15.4" height="12.3" fill="#93A2C9"/>
<rect x="25" y="444" width="15.4" height="3" fill="#5B78B0"/>
<rect x="26.0" y="445" width="3.6" height="0.9" fill="#9FB3DA"/>
<rect x="26.0" y="447.5" width="4.3" height="2.1" fill="#fff"/>
<rect x="26.0" y="450.5" width="4.3" height="2.1" fill="#fff"/>
<rect x="26.0" y="453.5" width="4.3" height="2.1" fill="#fff"/>
<rect x="30.8" y="445" width="3.6" height="0.9" fill="#9FB3DA"/>
<rect x="30.8" y="447.5" width="4.3" height="2.1" fill="#fff"/>
<rect x="30.8" y="450.5" width="4.3" height="2.1" fill="#fff"/>
<rect x="30.8" y="453.5" width="4.3" height="2.1" fill="#fff"/>
<rect x="35.6" y="445" width="3.6" height="0.9" fill="#9FB3DA"/>
<rect x="35.6" y="447.5" width="4.3" height="2.1" fill="#DCE6FA"/>
<rect x="35.6" y="450.5" width="4.3" height="2.1" fill="#DCE6FA"/>
<rect x="35.6" y="453.5" width="4.3" height="2.1" fill="#DCE6FA"/>
<defs><linearGradient id="gb" x1="0" y1="0" x2="0" y2="1"><stop offset="0" stop-color="#F7F7F9"/><stop offset="1" stop-color="#DCDFE6"/></linearGradient></defs>
<circle cx="189.5" cy="183.5" r="6" fill="url(#gb)" stroke="#A3A9B5" stroke-width="1.2"/>
<polygon points="186,182 193,182 189.5,186" fill="#46465A"/>
<path d="M208.3,181.3 L204.4,184.5 L208.3,187.7 M212.2,181.3 L208.3,184.5 L212.2,187.7" fill="none" stroke="#3C4150" stroke-width="1.2"/>
<rect x="242.5" y="217.5" width="10" height="10" fill="#F4F7FB" stroke="#5A6E96" stroke-width="1"/>
<rect x="242" y="217" width="11" height="3" fill="#3D8F95"/>
<path d="M244,222 H246.5 M248,222 H251 M244,224.5 H246.5 M248,224.5 H251" stroke="#7F8FB5" stroke-width="1"/>
<rect x="237.5" y="221.5" width="10" height="10" fill="#F4F7FB" stroke="#5A6E96" stroke-width="1"/>
<rect x="237" y="221" width="11" height="3" fill="#3D8F95"/>
<path d="M239,226 H241.5 M243,226 H246 M239,228.5 H241.5 M243,228.5 H246" stroke="#7F8FB5" stroke-width="1"/>
<rect x="906" y="226" width="10" height="1" fill="#444"/>
<rect x="952.5" y="221.5" width="9.5" height="9" fill="none" stroke="#444" stroke-width="1"/>
<path d="M997.8,221.3 L1008.2,230.8 M1008.2,221.3 L997.8,230.8" stroke="#444" stroke-width="1.1" fill="none"/>
<polygon points="243,243 243,257 230,257" fill="#EEF0F4"/><path d="M243,243 L230,257" stroke="#C9D3E6" stroke-width="1"/>
<polygon points="300.5,248.7 308.0,248.7 304.25,252.39999999999998" fill="#222"/>
<polygon points="422,248.7 429,248.7 425.5,252.2" fill="#222"/>
<polygon points="619,248.7 626,248.7 622.5,252.2" fill="#222"/>
<rect x="278" y="548" width="1.3" height="7" fill="#333"/><polygon points="284.6,548 284.6,555 279.8,551.5" fill="#333"/>
<polygon points="300,548 300,555 296,551.5" fill="#B4B4B4"/>
<polygon points="364.8,548 364.8,555 369.4,551.5" fill="#333"/>
<polygon points="380.6,548 380.6,555 385.2,551.5" fill="#333"/><rect x="386" y="548" width="1.3" height="7" fill="#333"/>
<polygon points="395,548 395,555 399.6,551.5" fill="#333"/>
<rect x="400.2" y="548" width="7" height="7" fill="#F0CB35"/>
<path d="M403.7,548 V555 M400.2,551.5 H407.2 M400.6,548.4 L406.8,554.6 M406.8,548.4 L400.6,554.6" stroke="#FFF9D6" stroke-width="0.7"/><rect x="402.7" y="550.5" width="2" height="2" fill="#FFFBE0"/>
<path d="M422,545.5 H433 L428.7,550 V555 H426.3 V550 Z" fill="#B0B0B0"/>
<path d="M428.6,552.6 L436.4,559.2 M436.4,552.6 L428.6,559.2" stroke="#9A9A9A" stroke-width="1.2"/>
<polygon points="604.2,548.3 604.2,555.3 600,551.8" fill="#777"/>
<polygon points="1014.4,548.3 1014.4,555.3 1018.6,551.8" fill="#777"/>
<path d="M1033,180.8 L1036.5,176.8 L1040,180.8" fill="none" stroke="#444" stroke-width="2.1"/>
<path d="M1033,552 L1036.5,556 L1040,552" fill="none" stroke="#444" stroke-width="2.1"/>
<path d="M236.6,567.2 L232.6,570.6 L236.6,574" fill="none" stroke="#444" stroke-width="2.1"/>
<path d="M1017.6,567.2 L1021.6,570.6 L1017.6,574" fill="none" stroke="#444" stroke-width="2.1"/>
<rect x="933.5" y="585.5" width="13" height="12" fill="none" stroke="#666" stroke-width="1"/>
<path d="M933.5,588.5 H946.5 M937.5,588.5 V597.5" stroke="#666" stroke-width="1" fill="none"/>
<path d="M939.5,591.5 H941.5 M943,591.5 H945 M939.5,594.5 H941.5 M943,594.5 H945" stroke="#666" stroke-width="1"/>
<path d="M1009.5,585.5 V592.5 H1015 Z" fill="none" stroke="#555" stroke-width="1"/>
<path d="M1021.6,585.6 L1015.2,592 L1013.6,593" stroke="#555" stroke-width="1.9" fill="none"/>
<rect x="1010.5" y="594.5" width="12.5" height="3" fill="none" stroke="#555" stroke-width="1"/>
<path d="M1013.5,595 V596.3 M1016.5,595 V596.3 M1019.5,595 V596.3" stroke="#555" stroke-width="1"/>
<path d="M236.5,405.3 V414.7 M231.8,410 H241.2 M233.2,406.7 L239.8,413.3 M239.8,406.7 L233.2,413.3" stroke="#111" stroke-width="1" fill="none"/>
</svg>
<span class="t" id="t0" style="left:627.5px;top:92.00px;font-size:35px;color:rgba(255,255,255,.6);transform:scaleX(0.8076);font-weight:bold;text-shadow:1px 1px 1.5px rgba(0,0,0,.16);">SOFTPEDIA</span>
<span class="t" id="t1" style="left:789.0px;top:97.00px;font-size:8px;color:rgba(255,255,255,.6);transform:scaleX(1.0582);">®</span>
<span class="t" id="t2" style="left:509.0px;top:19.00px;font-size:12px;color:#fff;transform:scaleX(0.9370);">Access</span>
<span class="t" id="t3" style="left:816.5px;top:19.00px;font-size:12px;color:#fff;transform:scaleX(0.9877);">Sign in</span>
<span class="t" id="t4" style="left:882.0px;top:19.00px;font-size:12px;color:#fff;transform:scaleX(0.9346);">?</span>
<span class="t" id="t5" style="left:30.0px;top:53.00px;font-size:12px;color:#fff;transform:scaleX(0.9176);">File</span>
<span class="t" id="t6" style="left:84.0px;top:53.00px;font-size:12px;color:#A4373A;transform:scaleX(1.0386);">Home</span>
<span class="t" id="t7" style="left:145.5px;top:53.00px;font-size:12px;color:#fff;transform:scaleX(0.9644);">Create</span>
<span class="t" id="t8" style="left:208.5px;top:53.00px;font-size:12px;color:#fff;transform:scaleX(0.9387);">External Data</span>
<span class="t" id="t9" style="left:306.0px;top:53.00px;font-size:12px;color:#fff;transform:scaleX(0.9606);">Database Tools</span>
<span class="t" id="t10" style="left:431.5px;top:53.00px;font-size:12px;color:#EACFD0;transform:scaleX(1.0147);">Tell me what you want to do</span>
<span class="t" id="t11" style="left:21.0px;top:117.00px;font-size:12px;color:#444444;transform:scaleX(0.9788);">View</span>
<span class="t" id="t12" style="left:71.0px;top:117.00px;font-size:12px;color:#444444;transform:scaleX(0.9206);">Paste</span>
<span class="t" id="t13" style="left:128.0px;top:83.00px;font-size:12px;color:#444444;transform:scaleX(1.0301);">Cut</span>
<span class="t" id="t14" style="left:128.0px;top:106.00px;font-size:12px;color:#444444;transform:scaleX(1.0084);">Copy</span>
<span class="t" id="t15" style="left:128.0px;top:129.00px;font-size:12px;color:#A6A6A6;transform:scaleX(0.9860);">Format Painter</span>
<span class="t" id="t16" style="left:230.0px;top:117.00px;font-size:12px;color:#444444;transform:scaleX(0.9842);">Filter</span>
<span class="t" id="t17" style="left:286.0px;top:83.00px;font-size:12px;color:#444444;transform:scaleX(0.9947);">Ascending</span>
<span class="t" id="t18" style="left:286.0px;top:106.00px;font-size:12px;color:#444444;transform:scaleX(0.9744);">Descending</span>
<span class="t" id="t19" style="left:286.0px;top:129.00px;font-size:12px;color:#A6A6A6;transform:scaleX(0.9531);">Remove Sort</span>
<span class="t" id="t20" style="left:404.0px;top:117.00px;font-size:12px;color:#444444;transform:scaleX(0.9219);">Refresh</span>
<span class="t" id="t21" style="left:412.5px;top:133.00px;font-size:12px;color:#444444;transform:scaleX(1.0679);">All</span>
<span class="t" id="t22" style="left:468.0px;top:83.00px;font-size:12px;color:#444444;transform:scaleX(0.9889);">New</span>
<span class="t" id="t23" style="left:468.0px;top:106.00px;font-size:12px;color:#444444;transform:scaleX(0.8681);">Save</span>
<span class="t" id="t24" style="left:468.0px;top:129.00px;font-size:12px;color:#444444;transform:scaleX(0.9586);">Delete</span>
<span class="t" id="t25" style="left:572.0px;top:117.00px;font-size:12px;color:#444444;transform:scaleX(0.9746);">Find</span>
<span class="t" id="t26" style="left:654.0px;top:117.00px;font-size:12px;color:#A6A6A6;transform:scaleX(0.9199);">Size to</span>
<span class="t" id="t27" style="left:649.0px;top:133.00px;font-size:12px;color:#A6A6A6;transform:scaleX(0.9682);">Fit Form</span>
<span class="t" id="t28" style="left:709.0px;top:117.00px;font-size:12px;color:#444444;transform:scaleX(0.9832);">Switch</span>
<span class="t" id="t29" style="left:698.0px;top:133.00px;font-size:12px;color:#444444;transform:scaleX(1.0116);">Windows</span>
<span class="t" id="t30" style="left:769.5px;top:83.00px;font-size:12px;color:#444444;transform:scaleX(1.0069);">Calibri</span>
<span class="t" id="t31" style="left:909.5px;top:83.00px;font-size:12px;color:#444444;transform:scaleX(0.8622);">11</span>
<span class="t" id="t32" style="left:773.5px;top:105.00px;font-size:12px;color:#777;transform:scaleX(0.9514);font-weight:bold;">B</span>
<span class="t" id="t33" style="left:796.0px;top:104.00px;font-size:13px;color:#555;transform:scaleX(1.6691);font-family:'Liberation Serif',serif;font-style:italic;font-weight:normal;-webkit-text-stroke:0.35px #555;">I</span>
<span class="t" id="t34" style="left:817.0px;top:104.00px;font-size:12px;color:#555;transform:scaleX(1.0090);font-weight:bold;">U</span>
<span class="t" id="t35" style="left:773.0px;top:127.00px;font-size:12px;color:#555;transform:scaleX(1.3411);">A</span>
<span class="t" id="t36" style="left:18.5px;top:152.00px;font-size:12px;color:#666666;transform:scaleX(0.9514);">Views</span>
<span class="t" id="t37" style="left:105.0px;top:152.00px;font-size:12px;color:#666666;transform:scaleX(0.9878);">Clipboard</span>
<span class="t" id="t38" style="left:276.0px;top:152.00px;font-size:12px;color:#666666;transform:scaleX(0.9825);">Sort &amp; Filter</span>
<span class="t" id="t39" style="left:457.0px;top:152.00px;font-size:12px;color:#666666;transform:scaleX(0.9119);">Records</span>
<span class="t" id="t40" style="left:589.0px;top:152.00px;font-size:12px;color:#666666;transform:scaleX(0.9746);">Find</span>
<span class="t" id="t41" style="left:679.5px;top:152.00px;font-size:12px;color:#666666;transform:scaleX(1.0483);">Window</span>
<span class="t" id="t42" style="left:837.5px;top:152.00px;font-size:12px;color:#666666;transform:scaleX(0.9582);">Text Formatting</span>
<span class="t" id="t43" style="left:18.0px;top:175.00px;font-size:21px;color:#AA4346;transform:scaleX(0.9596);">Tables</span>
<span class="t" id="t44" style="left:52.0px;top:207.00px;font-size:11.5px;color:#3A3A3A;transform:scaleX(0.9881);">Accounts</span>
<span class="t" id="t45" style="left:52.0px;top:231.00px;font-size:11.5px;color:#3A3A3A;transform:scaleX(1.0198);">Allotments</span>
<span class="t" id="t46" style="left:52.0px;top:255.00px;font-size:11.5px;color:#3A3A3A;transform:scaleX(0.9843);">Categories</span>
<span class="t" id="t47" style="left:52.0px;top:279.00px;font-size:11.5px;color:#3A3A3A;transform:scaleX(1.0050);">Reconciliations</span>
<span class="t" id="t48" style="left:52.0px;top:303.00px;font-size:11.5px;color:#3A3A3A;transform:scaleX(1.0223);">Softpedia table 2</span>
<span class="t" id="t49" style="left:52.0px;top:327.00px;font-size:11.5px;color:#3A3A3A;transform:scaleX(1.0195);">Softpedia table1</span>
<span class="t" id="t50" style="left:52.0px;top:351.00px;font-size:11.5px;color:#3A3A3A;transform:scaleX(1.0015);">Switchboard Items</span>
<span class="t" id="t51" style="left:52.0px;top:375.00px;font-size:11.5px;color:#3A3A3A;transform:scaleX(0.9653);">Trans_Account</span>
<span class="t" id="t52" style="left:52.0px;top:399.00px;font-size:11.5px;color:#3A3A3A;transform:scaleX(0.9539);">Trans_Category</span>
<span class="t" id="t53" style="left:52.0px;top:423.00px;font-size:11.5px;color:#3A3A3A;transform:scaleX(0.9747);">Transactions</span>
<span class="t" id="t54" style="left:52.0px;top:447.00px;font-size:11.5px;color:#3A3A3A;transform:scaleX(1.0118);">Vitals</span>
<span class="t" id="t55" style="left:535.0px;top:220.00px;font-size:12px;color:#444444;transform:scaleX(0.9669);">Accounts_NEW</span>
<span class="t" id="t56" style="left:252.0px;top:243.00px;font-size:13px;color:#222;transform:scaleX(1.0188);">Act_ID</span>
<span class="t" id="t57" style="left:348.0px;top:243.00px;font-size:13px;color:#222;transform:scaleX(1.0595);">Name</span>
<span class="t" id="t58" style="left:441.0px;top:243.00px;font-size:13px;color:#222;transform:scaleX(1.0692);">Lookup to Softpedia table 2</span>
<span class="t" id="t59" style="left:291.5px;top:264.00px;font-size:13px;color:#fff;transform:scaleX(0.9330);">201</span>
<span class="t" id="t60" style="left:316.5px;top:264.00px;font-size:13px;color:#111;transform:scaleX(1.0967);">Softpedia</span>
<span class="t" id="t61" style="left:634.1px;top:264.00px;font-size:13px;color:#111;transform:scaleX(1.0904);">Tested by Softpedia. Visit us at www.softpedia.com</span>
<span class="t" id="t62" style="left:291.5px;top:284.00px;font-size:13px;color:#111;transform:scaleX(0.9330);">202</span>
<span class="t" id="t63" style="left:316.5px;top:284.00px;font-size:13px;color:#111;transform:scaleX(1.1038);">Softpedia test</span>
<span class="t" id="t64" style="left:634.1px;top:284.00px;font-size:13px;color:#111;transform:scaleX(1.0580);">This is a Softpedia test</span>
<span class="t" id="t65" style="left:291.5px;top:304.00px;font-size:13px;color:#111;transform:scaleX(0.9330);">104</span>
<span class="t" id="t66" style="left:316.5px;top:304.00px;font-size:13px;color:#111;transform:scaleX(1.0694);">Checking Deleted</span>
<span class="t" id="t67" style="left:437.5px;top:304.00px;font-size:13px;color:#111;transform:scaleX(1.0647);">-, 1/1/2010, 1/1/2010</span>
<span class="t" id="t68" style="left:634.1px;top:304.00px;font-size:13px;color:#111;transform:scaleX(1.0584);">Covers all deleted checking accounts</span>
<span class="t" id="t69" style="left:291.5px;top:324.00px;font-size:13px;color:#111;transform:scaleX(0.9330);">105</span>
<span class="t" id="t70" style="left:316.5px;top:324.00px;font-size:13px;color:#111;transform:scaleX(1.1040);">Credit Deleted</span>
<span class="t" id="t71" style="left:437.5px;top:324.00px;font-size:13px;color:#111;transform:scaleX(1.0647);">-, 1/1/2010, 1/1/2010</span>
<span class="t" id="t72" style="left:634.1px;top:324.00px;font-size:13px;color:#111;transform:scaleX(1.0720);">Covers all deleted credit accounts</span>
<span class="t" id="t73" style="left:291.5px;top:344.00px;font-size:13px;color:#111;transform:scaleX(0.9330);">102</span>
<span class="t" id="t74" style="left:316.5px;top:344.00px;font-size:13px;color:#111;transform:scaleX(1.0968);">Other Debt</span>
<span class="t" id="t75" style="left:437.5px;top:344.00px;font-size:13px;color:#111;transform:scaleX(1.0647);">-, 1/1/2010, 1/1/2010</span>
<span class="t" id="t76" style="left:634.1px;top:344.00px;font-size:13px;color:#111;transform:scaleX(1.0856);">Short-term debt that is not included in a formal credit account.</span>
<span class="t" id="t77" style="left:291.5px;top:364.00px;font-size:13px;color:#111;transform:scaleX(0.9330);">103</span>
<span class="t" id="t78" style="left:316.5px;top:364.00px;font-size:13px;color:#111;transform:scaleX(1.0554);">Receivables</span>
<span class="t" id="t79" style="left:437.5px;top:364.00px;font-size:13px;color:#111;transform:scaleX(1.0647);">-, 1/1/2010, 1/1/2010</span>
<span class="t" id="t80" style="left:634.1px;top:364.00px;font-size:13px;color:#111;transform:scaleX(1.0725);">Short-term outstanding receivables, such as short-term loans to</span>
<span class="t" id="t81" style="left:291.5px;top:384.00px;font-size:13px;color:#111;transform:scaleX(0.9330);">101</span>
<span class="t" id="t82" style="left:316.5px;top:384.00px;font-size:13px;color:#111;transform:scaleX(0.9799);">Cash</span>
<span class="t" id="t83" style="left:437.5px;top:384.00px;font-size:13px;color:#111;transform:scaleX(1.0647);">-, 1/1/2010, 1/1/2010</span>
<span class="t" id="t84" style="left:634.1px;top:384.00px;font-size:13px;color:#111;transform:scaleX(1.0363);">Cash funds</span>
<span class="t" id="t85" style="left:232.0px;top:547.00px;font-size:11px;color:#444444;transform:scaleX(1.0187);">Record:</span>
<span class="t" id="t86" style="left:309px;top:547.00px;font-size:11px;color:#000;">1 of 7</span>
<span class="t" id="t87" style="left:440.0px;top:547.00px;font-size:11px;color:#8C8C8C;transform:scaleX(1.0647);">No Filter</span>
<span class="t" id="t88" style="left:501.0px;top:547.00px;font-size:11.5px;color:#000;transform:scaleX(0.9262);">Search</span>
<span class="t" id="t89" style="left:16.0px;top:587.00px;font-size:11px;color:#444444;transform:scaleX(1.0441);">Datasheet View</span>
<span class="t" id="t90" style="left:852.0px;top:587.00px;font-size:11px;color:#444444;transform:scaleX(1.0145);">Num Lock</span>
<span class="t" id="t91" style="left:970.5px;top:587.00px;font-size:9px;color:#444444;transform:scaleX(0.8187);">SQL</span>
</body></html>
